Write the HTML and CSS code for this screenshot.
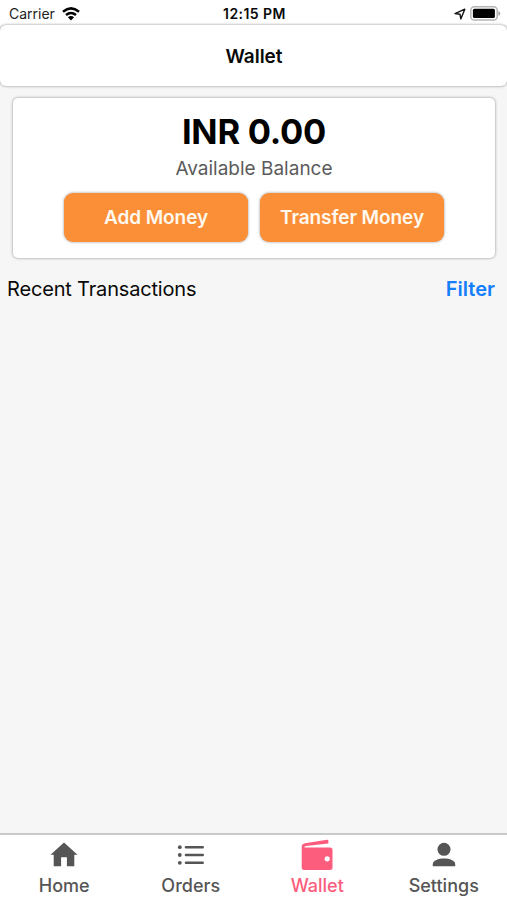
FILE: index.html
```
<!DOCTYPE html>
<html lang="en">
<head>
<meta charset="utf-8">
<title>Wallet</title>
<link rel="stylesheet" href="styles.css">
</head>
<body>
<div class="screen">
  <div class="status">
    <div class="carrier"><span class="carrier-name">Carrier</span>
      <svg class="wifi" width="18" height="14" viewBox="0 0 18 14"><g fill="none" stroke="#000" stroke-width="2.5"><path d="M1 4.7Q9-1.9 17 4.7"/><path d="M4 8Q9 3.9 14 8"/></g><path d="M9 13.5 5.9 10.3Q9 7.8 12.1 10.3Z"/></svg>
    </div>
    <time class="clock">12:15 PM</time>
    <div class="indicators">
      <svg width="12" height="12" viewBox="0 0 12 12"><path d="M1 5.6 10.8 1.2 6.8 10.9 6 6.2Z" fill="none" stroke="#111" stroke-width="1.4" stroke-linejoin="round"/></svg>
      <svg width="31" height="15" viewBox="0 0 31 15"><rect x=".8" y=".8" width="26.4" height="13.2" rx="3.6" fill="#fff" stroke="#b5b5b5" stroke-width="1.5"/><rect x="2.9" y="2.7" width="22" height="9.4" rx="1.6"/><path d="M28.3 5Q30.3 5.8 30.3 7.4T28.3 9.8Z" fill="#aaa"/></svg>
    </div>
  </div>
  <header class="header"><h1>Wallet</h1></header>
  <main>
    <section class="card">
      <div class="amount">INR 0.00</div>
      <div class="caption">Available Balance</div>
      <div class="actions"><button>Add Money</button><button>Transfer Money</button></div>
    </section>
    <div class="list-head"><h2>Recent Transactions</h2><a class="filter">Filter</a></div>
  </main>
  <nav class="tabs">
    <a class="tab"><svg width="34" height="34" viewBox="0 0 34 34"><path d="M17 4.6 30.5 16.8H27.3V28.3H19.9V19.2H14.1V28.3H6.7V16.8H3.5Z"/></svg><span>Home</span></a>
    <a class="tab"><svg width="34" height="34" viewBox="0 0 34 34"><circle cx="5.8" cy="9.2" r="1.9"/><circle cx="5.8" cy="17" r="1.9"/><circle cx="5.8" cy="24.8" r="1.9"/><path d="M12 9.2H28.7M12 17H28.7M12 24.8H28.7" stroke="currentColor" stroke-width="2.6" stroke-linecap="round"/></svg><span>Orders</span></a>
    <a class="tab active"><svg width="34" height="34" viewBox="0 0 34 34"><path fill-rule="evenodd" d="M4.4 9.4H30Q32.5 9.4 32.5 11.9V29.5Q32.5 32 30 32H4.2Q1.7 32 1.7 29.5V9Q1.7 5.8 5 5.2L27 1.8Q28.4 1.6 28.4 3V5.4L6 8.1Q4.2 8.4 4.4 9.4ZM27.2 18.2A2.6 2.6 0 1 0 27.2 23.4 2.6 2.6 0 0 0 27.2 18.2Z"/></svg><span>Wallet</span></a>
    <a class="tab"><svg width="34" height="34" viewBox="0 0 34 34"><circle cx="17" cy="11.3" r="6.5"/><path d="M5.8 28.3V26.3C5.8 18.7 28.2 18.7 28.2 26.3V28.3Z"/></svg><span>Settings</span></a>
  </nav>
</div>
</body>
</html>
```
FILE: styles.css
```
* { box-sizing: border-box; }
body { margin: 0; font-family: Inter, "Liberation Sans", sans-serif; color: #090909; }
h1, h2 { margin: 0; font: inherit; }
.screen { display: flex; flex-direction: column; width: 507px; height: 900px; background: #f6f6f6; overflow: hidden; }
.status { display: grid; grid-template-columns: 1fr auto 1fr; align-items: center; height: 25px; padding: 2px 7px 0 9px; background: #fff; flex: none; }
.carrier { display: flex; align-items: center; gap: 7px; font-size: 14px; color: #222; }
.clock { font-size: 14px; font-weight: 600; letter-spacing: .45px; }
.indicators { display: flex; justify-content: flex-end; align-items: center; gap: 4px; margin-right: -1px; }
.header { display: flex; align-items: center; justify-content: center; flex: none; height: 61px; padding: 2px 0 0 1px; background: #fff; border-radius: 6px; box-shadow: 0 0 3px rgba(0,0,0,.45); font-size: 19px; font-weight: 600; }
main { flex: 1; padding-top: 12px; }
.card { display: flex; flex-direction: column; align-items: center; height: 160px; margin: 0 12px 0 13px; padding-top: 13px; background: #fff; border-radius: 5px; box-shadow: 0 0 3px rgba(0,0,0,.45); }
.amount { font-size: 34.5px; line-height: 42px; font-weight: 700; letter-spacing: -.25px; color: #000; }
.caption { margin-top: 4px; font-size: 19px; line-height: 24px; color: #5b5b5b; }
.actions { display: flex; gap: 12px; margin-top: 12px; }
button { width: 184px; height: 49px; padding: 0; border: 0; border-radius: 9px; background: #fb8f37; color: #fff8ef; box-shadow: 0 0 3px rgba(0,0,0,.4); font: 600 19px Inter, sans-serif; letter-spacing: -.08px; white-space: nowrap; }
.list-head { display: flex; justify-content: space-between; margin-top: 19px; padding: 0 12px 0 7px; font-size: 20px; line-height: 24px; }
.list-head h2 { letter-spacing: -.17px; }
.filter { color: #147efb; font-weight: 600; }
.tabs { display: grid; grid-template-columns: repeat(4, 1fr); flex: none; height: 67px; padding-left: 1px; border-top: 2px solid #c9c9c9; background: #fff; }
.tab { display: flex; flex-direction: column; align-items: center; padding-top: 3px; color: #555; font-size: 18px; line-height: 22px; font-weight: 500; }
.tab svg { fill: currentColor; flex: none; margin-bottom: 3px; }
.active { color: #fc5d7d; }
```
